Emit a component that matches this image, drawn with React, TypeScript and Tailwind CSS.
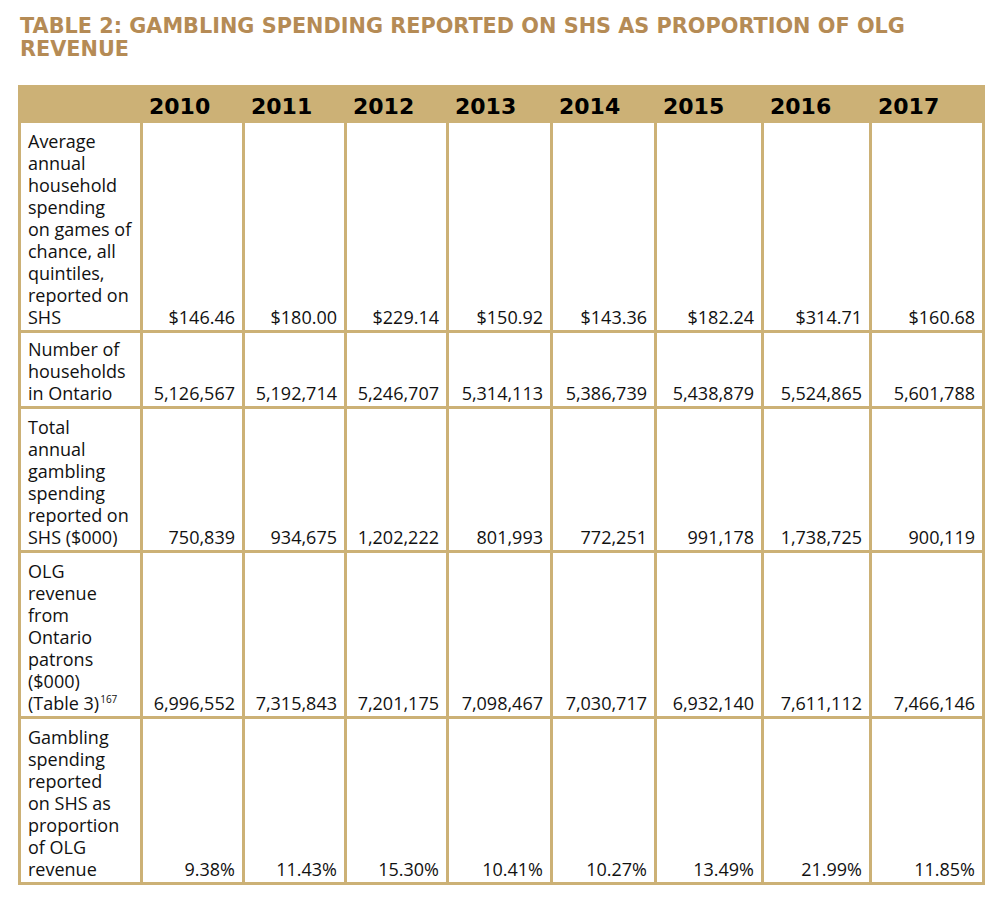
import React from "react";

type Row = { label: React.ReactNode[]; values: string[] };

const years = ["2010", "2011", "2012", "2013", "2014", "2015", "2016", "2017"];

const rows: Row[] = [
  {
    label: ["Average", "annual", "household", "spending", "on games of", "chance, all", "quintiles,", "reported on", "SHS"],
    values: ["$146.46", "$180.00", "$229.14", "$150.92", "$143.36", "$182.24", "$314.71", "$160.68"],
  },
  {
    label: ["Number of", "households", "in Ontario"],
    values: ["5,126,567", "5,192,714", "5,246,707", "5,314,113", "5,386,739", "5,438,879", "5,524,865", "5,601,788"],
  },
  {
    label: ["Total", "annual", "gambling", "spending", "reported on", "SHS ($000)"],
    values: ["750,839", "934,675", "1,202,222", "801,993", "772,251", "991,178", "1,738,725", "900,119"],
  },
  {
    label: [
      "OLG",
      "revenue",
      "from",
      "Ontario",
      "patrons",
      "($000)",
      <>
        (Table 3)<sup className="ml-[1px] text-[10px] -top-[7px]">167</sup>
      </>,
    ],
    values: ["6,996,552", "7,315,843", "7,201,175", "7,098,467", "7,030,717", "6,932,140", "7,611,112", "7,466,146"],
  },
  {
    label: ["Gambling", "spending", "reported", "on SHS as", "proportion", "of OLG", "revenue"],
    values: ["9.38%", "11.43%", "15.30%", "10.41%", "10.27%", "13.49%", "21.99%", "11.85%"],
  },
];

export default function App() {
  return (
    <div className="min-h-[897px] w-[995px] bg-white pl-[18px] pt-[15px]">
      <h1
        className="ml-[2px] text-[20.8px] leading-[23px] font-bold uppercase text-[#b58b55]"
        style={{ fontFamily: '"DejaVu Sans", sans-serif' }}
      >
        Table 2: Gambling Spending Reported on SHS as Proportion of OLG
        <br />
        Revenue
      </h1>
      <div
        className="mt-[24px] grid w-[967px] grid-cols-[122px_102px_102px_102px_104px_104px_107px_108px_110px] grid-rows-[35px_210px_76px_144px_166px_163px] border-[3px] border-[#ccb176] text-[18px] leading-[22px] text-[#111]"
        style={{ fontFamily: '"Open Sans", sans-serif' }}
      >
        <div className="bg-[#ccb176]" />
        {years.map((y) => (
          <div
            key={y}
            className="bg-[#ccb176] pl-[6px] pt-[6px] text-[22px] font-bold leading-[26px] text-black"
            style={{ fontFamily: '"DejaVu Sans", sans-serif' }}
          >
            {y}
          </div>
        ))}
        {rows.map((r, ri) => {
          const last = ri === rows.length - 1;
          return (
            <React.Fragment key={ri}>
              <div
                className={
                  "flex flex-col justify-end whitespace-nowrap border-r-[3px] border-[#ccb176] pb-[2px] pl-[7px] " +
                  (last ? "" : "border-b-[3px]")
                }
              >
                {r.label.map((l, li) => (
                  <div key={li}>{l}</div>
                ))}
              </div>
              {r.values.map((v, vi) => (
                <div
                  key={vi}
                  className={
                    "flex items-end justify-end whitespace-nowrap border-[#ccb176] pb-[2px] pr-[7px] " +
                    (vi === r.values.length - 1 ? "" : "border-r-[3px] ") +
                    (last ? "" : "border-b-[3px]")
                  }
                >
                  {v}
                </div>
              ))}
            </React.Fragment>
          );
        })}
      </div>
    </div>
  );
}
